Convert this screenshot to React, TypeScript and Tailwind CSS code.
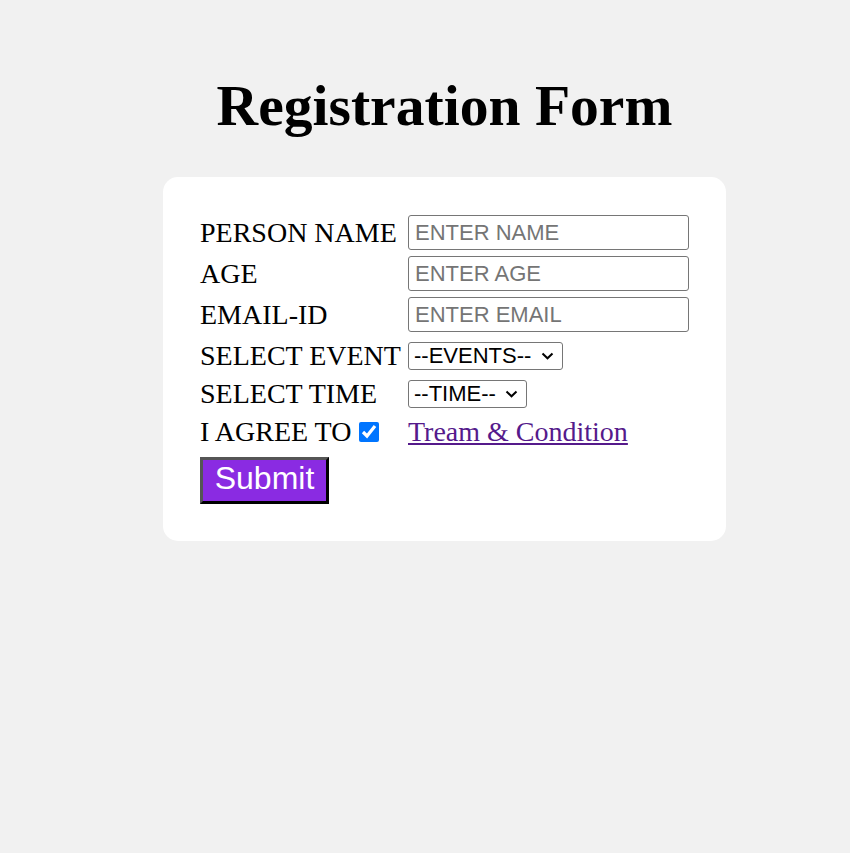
import React from 'react'

const serif = "font-['Liberation_Serif','Times_New_Roman',serif]"
const sans = "font-['Liberation_Sans',Arial,sans-serif]"

function Row({ label, children, h }: { label: React.ReactNode; children: React.ReactNode; h: string }) {
    return (
        <div className={`flex items-center ${h}`}>
            <div className="w-[208px] flex items-center text-[28px] leading-[32px]">{label}</div>
            <div className="flex items-center">{children}</div>
        </div>
    )
}

function Select({ label, w }: { label: string; w: string }) {
    return (
        <div className={`relative ${w}`}>
            <select
                className={`appearance-none w-full h-[28px] border border-[#767676] rounded-[3px] bg-white pl-[5px] text-[22px] leading-[24px] ${sans} text-black`}
                defaultValue=""
            >
                <option value="">{label}</option>
            </select>
            {/* chevron */}
            <svg
                className="absolute right-[9px] top-[10px] pointer-events-none"
                width="13"
                height="8"
                viewBox="0 0 13 8"
                fill="none"
            >
                <path d="M1.5 1.5 L6.5 6.3 L11.5 1.5" stroke="#000" strokeWidth="2" />
            </svg>
        </div>
    )
}

export default function App() {
    const inputCls = `w-[281px] h-[35px] border border-[#767676] rounded-[3px] bg-white px-[6px] text-[22px] ${sans} text-black placeholder:text-[#757575] outline-none`

    return (
        <div className={`min-h-screen bg-[#f1f1f1] pl-[39px] flex flex-col items-center ${serif} text-black`}>
            {/* Title */}
            <h1 className="mt-[73px] text-[57.6px] font-bold leading-[66px]">Registration Form</h1>

            {/* Card */}
            <div className="mt-[38px] w-[563px] bg-white rounded-[15px] pt-[38px] pb-[37px] px-[37px] flex flex-col gap-[6px]">
                <Row label="PERSON NAME" h="h-[35px]">
                    <input className={inputCls} placeholder="ENTER NAME" />
                </Row>
                <Row label="AGE" h="h-[35px]">
                    <input className={inputCls} placeholder="ENTER AGE" />
                </Row>
                <Row label="EMAIL-ID" h="h-[35px]">
                    <input className={inputCls} placeholder="ENTER EMAIL" />
                </Row>
                <Row label="SELECT EVENT" h="h-[32px] mt-[2px]">
                    <Select label="--EVENTS--" w="w-[155px]" />
                </Row>
                <Row label="SELECT TIME" h="h-[32px]">
                    <Select label="--TIME--" w="w-[119px]" />
                </Row>
                <Row
                    label={
                        <>
                            I AGREE TO
                            <input type="checkbox" defaultChecked className="ml-[8px] w-[20px] h-[20px]" />
                        </>
                    }
                    h="h-[32px]"
                >
                    <a href="#" className="text-[28px] leading-[32px] text-[#551a8b] underline">
                        Tream &amp; Condition
                    </a>
                </Row>
                <div className="mt-[3px]">
                    <button
                        className={`w-[129px] h-[47px] pb-[5px] bg-[#8a2be2] text-white text-[32px] leading-none ${sans} border-[3px] border-solid border-t-[#555] border-l-[#555] border-b-black border-r-black`}
                    >
                        Submit
                    </button>
                </div>
            </div>
        </div>
    )
}
